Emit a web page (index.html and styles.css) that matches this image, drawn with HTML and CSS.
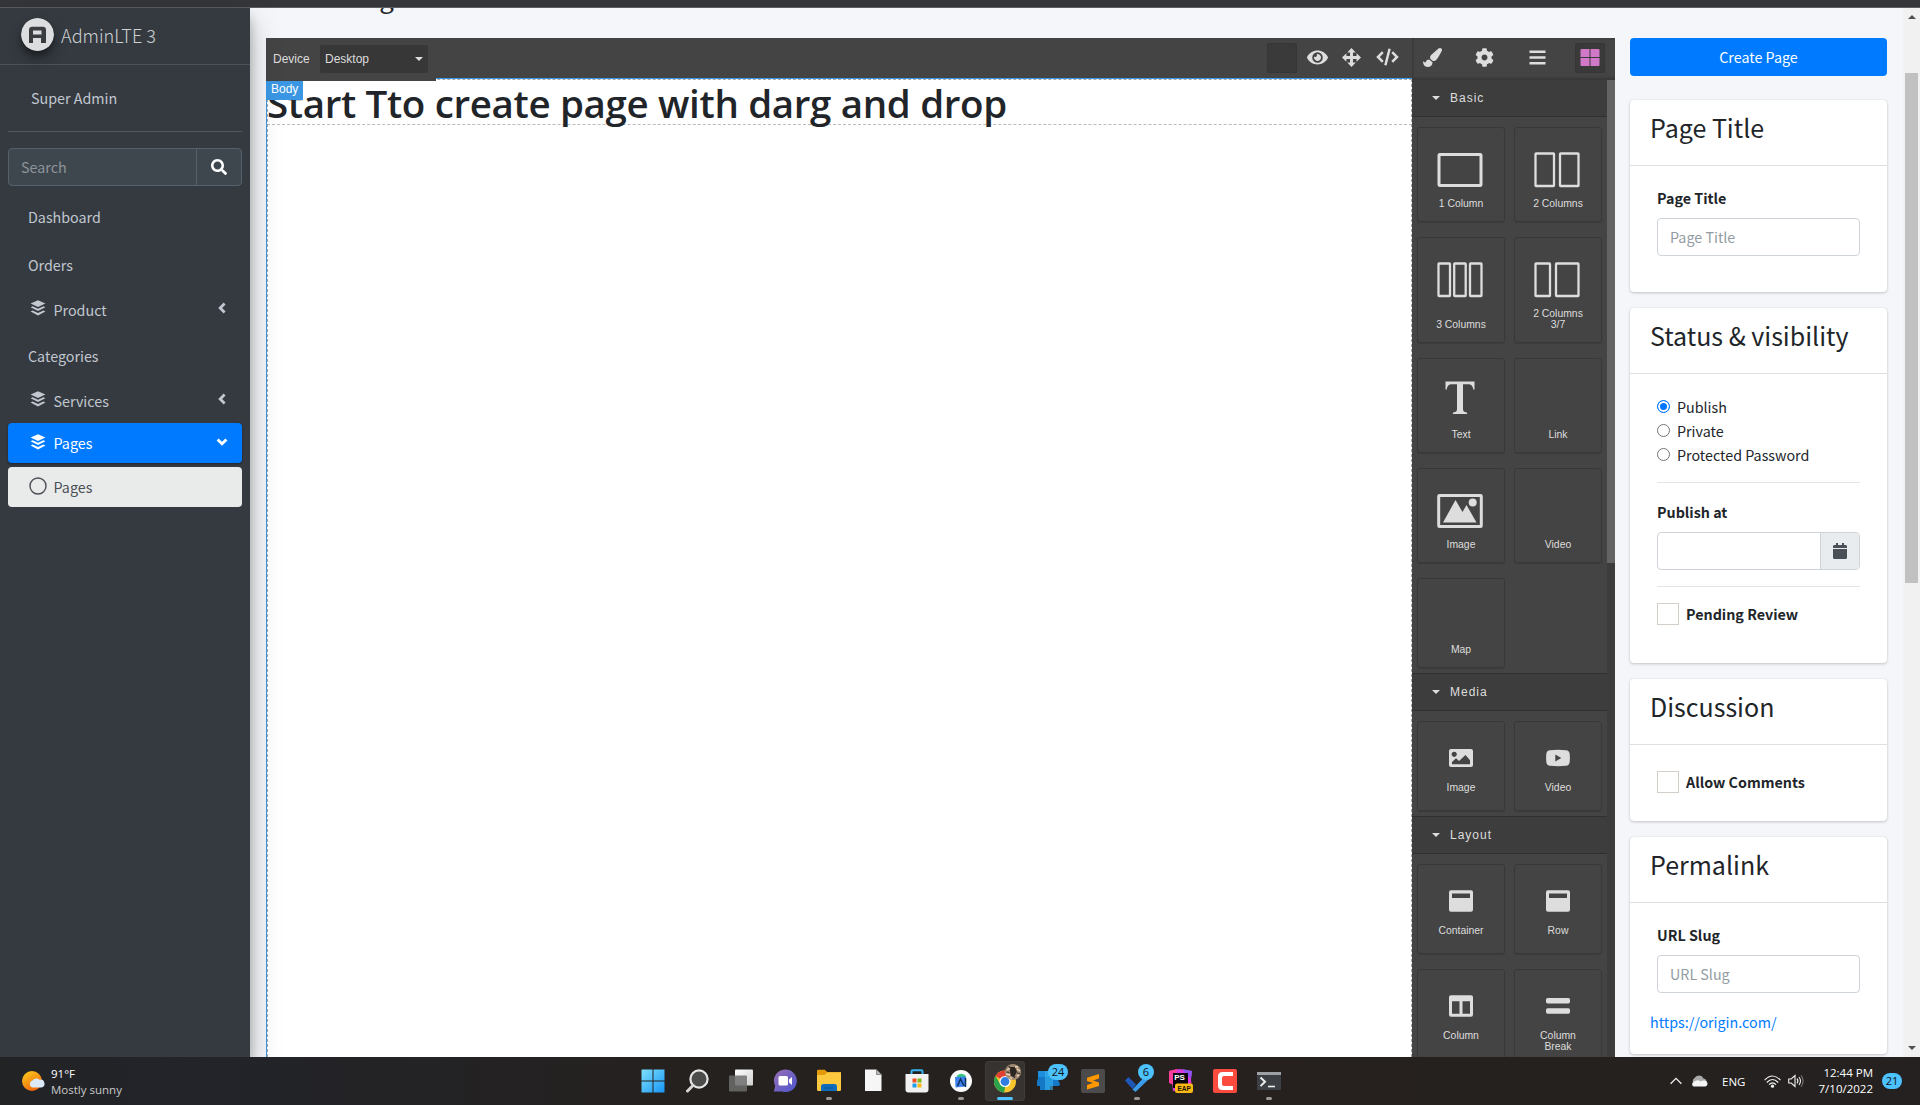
FILE: index.html
```html
<!DOCTYPE html>
<html lang="en">
<head>
<meta charset="utf-8">
<title>AdminLTE 3 | Create Page</title>
<link rel="stylesheet" href="styles.css">
</head>
<body>
<svg class="defs" aria-hidden="true">
  <symbol id="layers" viewBox="0 0 16 16"><path d="M8 .2 15.4 3.6 8 7 .6 3.600zM2.600 6.200 8 8.700l5.400-2.500 2 1L8 11 .6 7.200zM2.600 10.600 8 13.100l5.400-2.500 2 1L8 15.500.6 11.600z"/></symbol>
  <symbol id="angle" viewBox="0 0 8 12"><path d="M6.600 1.600 2.200 6l4.400 4.400" fill="none" stroke="currentColor" stroke-width="2.800"/></symbol>
</svg>
<div class="chrome-strip"></div>
<div class="app">
  <aside class="sidebar">
    <div class="brand">
      <svg class="brand-logo" viewBox="0 0 33 33"><circle cx="16.500" cy="16.500" r="16.500" fill="#dcdddf"/><path d="M8 25V12q0-3.200 3.200-3.200h10.600q3.200 0 3.200 3.200v13h-5v-5h-8v5zM12 12.500v4h8.500v-4z" fill="#3a3d40" fill-rule="evenodd"/></svg>
      <span class="brand-text">AdminLTE 3</span>
    </div>
    <div class="user-panel"><span>Super Admin</span></div>
    <div class="search">
      <div class="search-input">Search</div>
      <div class="search-btn"><svg width="16" height="16" viewBox="0 0 512 512"><path d="M505 442.700L405.300 343c-4.500-4.500-10.600-7-17-7H372c27.600-35.300 44-79.700 44-128C416 93.100 322.900 0 208 0S0 93.100 0 208s93.100 208 208 208c48.300 0 92.700-16.400 128-44v16.300c0 6.400 2.500 12.500 7 17l99.700 99.700c9.400 9.400 24.600 9.400 33.900 0l28.300-28.300c9.400-9.400 9.400-24.600.1-34zM208 336c-70.700 0-128-57.200-128-128 0-70.700 57.200-128 128-128 70.700 0 128 57.200 128 128 0 70.700-57.200 128-128 128z"/></svg></div>
    </div>
    <nav class="nav">
      <a class="nav-item plain">Dashboard</a>
      <a class="nav-item plain orders">Orders</a>
      <a class="nav-item tree"><svg class="ico"><use href="#layers"/></svg><span>Product</span><svg class="arrow"><use href="#angle"/></svg></a>
      <a class="nav-item plain cats">Categories</a>
      <a class="nav-item tree"><svg class="ico"><use href="#layers"/></svg><span>Services</span><svg class="arrow"><use href="#angle"/></svg></a>
      <a class="nav-item active"><svg class="ico"><use href="#layers"/></svg><span>Pages</span><svg class="arrow open"><use href="#angle"/></svg></a>
      <a class="nav-item sub"><svg class="ring" viewBox="0 0 18 18"><circle cx="9" cy="9" r="8" fill="none" stroke="currentColor" stroke-width="1.400"/></svg><span>Pages</span></a>
    </nav>
  </aside>

  <div class="content">
    <div class="page-head"><h1>Create Page</h1></div>
    <div class="columns">
      <section class="editor">
        <div class="stage">
          <div class="toolbar">
            <span class="dev-label">Device</span>
            <div class="select">Desktop<i class="caret"></i></div>
            <div class="tools">
              <span class="tool-btn pressed"></span>
              <svg class="t-eye" viewBox="0 0 576 512"><path d="M572.520 241.400C518.290 135.590 410.930 64 288 64S57.680 135.640 3.480 241.410a32.350 32.350 0 0 0 0 29.190C57.710 376.410 165.070 448 288 448s230.320-71.640 284.520-177.410a32.350 32.350 0 0 0 0-29.190zM288 400a144 144 0 1 1 144-144 143.930 143.930 0 0 1-144 144zm0-240a95.310 95.310 0 0 0-25.310 3.790 47.850 47.850 0 0 1-66.900 66.900A95.780 95.780 0 1 0 288 160z"/></svg>
              <svg class="t-move" viewBox="0 0 18 18"><path d="M9 0l4 4.200h-2.600v3.400h3.400V5L18 9l-4.200 4v-2.600h-3.400v3.400H13L9 18l-4-4.200h2.600v-3.400H4.200V13L0 9l4.200-4v2.600h3.400V4.200H5z"/></svg>
              <svg class="t-code" viewBox="0 0 23 18"><path d="M6.800 4.200 2 9l4.800 4.800M16.200 4.200 21 9l-4.800 4.800M13.600.8 9.400 17.200" fill="none" stroke="currentColor" stroke-width="2.500"/></svg>
            </div>
          </div>
          <div class="canvas">
            <div class="heading-box"><h2>Start Tto create page with darg and drop</h2></div>
            <span class="toolbar-tail"></span>
            <span class="badge">Body</span>
          </div>
        </div>
        <div class="panel">
          <div class="views">
            <svg class="v-brush" viewBox="0 0 512 512"><path d="M167.020 309.340c-40.120 2.580-76.530 17.860-97.190 72.300-2.350 6.210-8 9.980-14.590 9.980-11.110 0-45.460-27.670-55.250-34.350C0 439.620 37.930 512 128 512c75.860 0 128-43.770 128-120.190 0-3.110-.65-6.080-.97-9.130l-88.010-73.340zM457.890 0c-15.160 0-29.370 6.710-40.210 16.450C213.270 199.050 192 203.340 192 257.090c0 13.700 3.250 26.760 8.730 38.700l63.820 53.180c7.210 1.800 14.640 3.030 22.390 3.030 62.110 0 98.110-45.470 211.160-256.460 7.380-14.350 13.900-29.850 13.900-45.990C512 20.640 486 0 457.890 0z"/></svg>
            <svg class="v-cog" viewBox="0 0 512 512"><path d="M487.400 315.700l-42.600-24.600c4.300-23.200 4.300-47 0-70.200l42.600-24.600c4.900-2.800 7.100-8.600 5.500-14-11.100-35.600-30-67.800-54.700-94.600-3.800-4.100-10-5.100-14.800-2.300L380.800 110c-17.900-15.400-38.500-27.300-60.800-35.100V25.800c0-5.600-3.900-10.500-9.400-11.700-36.700-8.200-74.300-7.800-109.200 0-5.500 1.200-9.400 6.100-9.400 11.700V75c-22.200 7.900-42.800 19.800-60.800 35.100L88.700 85.500c-4.900-2.800-11-1.900-14.800 2.300-24.700 26.700-43.600 58.900-54.700 94.600-1.700 5.400.6 11.200 5.500 14L67.300 221c-4.300 23.200-4.300 47 0 70.200l-42.600 24.600c-4.900 2.800-7.100 8.600-5.500 14 11.100 35.600 30 67.800 54.700 94.600 3.800 4.100 10 5.100 14.800 2.300l42.600-24.600c17.900 15.400 38.500 27.300 60.800 35.100v49.200c0 5.600 3.900 10.500 9.400 11.700 36.700 8.200 74.300 7.800 109.200 0 5.500-1.200 9.400-6.100 9.400-11.700v-49.200c22.200-7.900 42.800-19.800 60.800-35.100l42.600 24.600c4.900 2.800 11 1.900 14.800-2.300 24.700-26.700 43.600-58.900 54.700-94.600 1.500-5.500-.7-11.300-5.600-14.100zM256 336c-44.100 0-80-35.900-80-80s35.900-80 80-80 80 35.900 80 80-35.900 80-80 80z"/></svg>
            <svg class="v-bars" viewBox="0 0 17 15"><path d="M.5.500h16v2.600H.5zM.5 6.200h16v2.600H.5zM.5 11.900h16v2.600H.5z"/></svg>
            <span class="tool-btn pressed pink"><svg width="20" height="17" viewBox="0 0 20 17"><path d="M1.500 0H9.500v8H.5V1q0-1 1-1zM10.500 0h8q1 0 1 1v7h-9zM.5 9h9v8h-8q-1 0-1-1zM10.500 9h9v7q0 1-1 1h-8z"/></svg></span>
          </div>
          <div class="panel-body">
            <div class="cats-list">
              <div class="cat-title"><i class="caret"></i>Basic</div>
              <div class="blocks basic">
                <div class="block"><svg class="big" viewBox="0 0 46 36"><rect x="2" y="2.500" width="42" height="31" rx=".8" class="line3"/></svg><span>1 Column</span></div>
                <div class="block"><svg class="big" viewBox="0 0 46 36"><rect x="1.500" y="1.500" width="18.500" height="32.500" rx=".6" class="line2"/><rect x="26" y="1.500" width="18.500" height="32.500" rx=".6" class="line2"/></svg><span>2 Columns</span></div>
                <div class="block"><svg class="big" viewBox="0 0 46 36"><rect x="1.500" y="1.500" width="11.500" height="32.500" rx=".6" class="line2"/><rect x="17.200" y="1.500" width="11.500" height="32.500" rx=".6" class="line2"/><rect x="33" y="1.500" width="11.500" height="32.500" rx=".6" class="line2"/></svg><span>3 Columns</span></div>
                <div class="block"><svg class="big" viewBox="0 0 46 36"><rect x="1.500" y="1.500" width="14.500" height="32.500" rx=".6" class="line2"/><rect x="22" y="1.500" width="22.500" height="32.500" rx=".6" class="line2"/></svg><span>2 Columns<br>3/7</span></div>
                <div class="block"><svg class="big glyph" viewBox="0 0 46 36"><path d="M8.500 1.500h29v8h-1.200q-.6-5.300-5-5.300H26V29q0 3.200 3.500 3.400h.6V34H15.900v-1.600h.6Q20 32.200 20 29V4.200h-5.300q-4.400 0-5 5.300H8.500z"/></svg><span>Text</span></div>
                <div class="block"><span>Link</span></div>
                <div class="block"><svg class="big" viewBox="0 0 46 36"><rect x="1.700" y="2.500" width="42.600" height="31" rx=".8" class="line3"/><path d="M6 29.500 18.500 7l7 12 4-7L39.500 29.500z"/><circle cx="35.700" cy="9.500" r="4"/></svg><span>Image</span></div>
                <div class="block"><span>Video</span></div>
                <div class="block"><span>Map</span></div>
              </div>
              <div class="cat-title ruled"><i class="caret"></i>Media</div>
              <div class="blocks compact">
                <div class="block"><svg class="small" viewBox="0 0 24 24"><path fill-rule="evenodd" d="M2 3h20q2 0 2 2v14q0 2-2 2H2q-2 0-2-2V5q0-2 2-2zM3 18.200h18v-4L16.500 9 10 15l-3-2.800L3 16zM5.200 5.700a2.600 2.600 0 1 0 .01 0z"/></svg><span>Image</span></div>
                <div class="block"><svg class="small" viewBox="0 0 24 24"><path fill-rule="evenodd" d="M4 4.200q8-.7 16 0 3.200.2 3.600 3.300.6 4.500 0 9-.4 3.100-3.600 3.300-8 .7-16 0Q.8 19.600.4 16.500q-.6-4.500 0-9Q.8 4.400 4 4.200zM9.300 8.600v6.800l6-3.400z"/></svg><span>Video</span></div>
              </div>
              <div class="cat-title ruled"><i class="caret"></i>Layout</div>
              <div class="blocks compact">
                <div class="block"><svg class="small" viewBox="0 0 24 24"><path fill-rule="evenodd" d="M2 1.200h20q2 0 2 2v17.600q0 2-2 2H2q-2 0-2-2V3.200q0-2 2-2zM3 4.500V9h18V4.500z"/></svg><span>Container</span></div>
                <div class="block"><svg class="small" viewBox="0 0 24 24"><path fill-rule="evenodd" d="M2 1.200h20q2 0 2 2v17.600q0 2-2 2H2q-2 0-2-2V3.200q0-2 2-2zM3 4.500V9h18V4.500z"/></svg><span>Row</span></div>
                <div class="block"><svg class="small" viewBox="0 0 24 24"><path fill-rule="evenodd" d="M2 1.200h20q2 0 2 2v17.600q0 2-2 2H2q-2 0-2-2V3.200q0-2 2-2zM3 7.200v12.500h7.500V7.200zM13.500 7.200v12.500H21V7.200z"/></svg><span>Column</span></div>
                <div class="block"><svg class="small" viewBox="0 0 24 24"><rect y="4" width="24" height="5.500" rx="1.700"/><rect y="14.300" width="24" height="5.500" rx="1.700"/></svg><span>Column<br>Break</span></div>
              </div>
            </div>
            <div class="panel-scroll"><div class="panel-thumb"></div></div>
          </div>
        </div>
      </section>

      <aside class="meta">
        <div class="btn-create">Create Page</div>
        <div class="card c-title">
          <h3>Page Title</h3>
          <div class="card-body">
            <label class="lbl">Page Title</label>
            <div class="field">Page Title</div>
          </div>
        </div>
        <div class="card c-status">
          <h3>Status &amp; visibility</h3>
          <div class="card-body">
            <div class="radio"><i class="dot on"></i>Publish</div>
            <div class="radio"><i class="dot"></i>Private</div>
            <div class="radio"><i class="dot"></i>Protected Password</div>
            <div class="rule first"></div>
            <label class="lbl">Publish at</label>
            <div class="date"><div class="date-input"></div><div class="date-btn"><svg width="14" height="16" viewBox="0 0 448 512"><path d="M12 192h424c6.600 0 12 5.400 12 12v260c0 26.500-21.500 48-48 48H48c-26.500 0-48-21.500-48-48V204c0-6.600 5.400-12 12-12zm436-44v-36c0-26.500-21.500-48-48-48h-48V12c0-6.600-5.400-12-12-12h-40c-6.600 0-12 5.400-12 12v52H160V12c0-6.600-5.400-12-12-12h-40c-6.600 0-12 5.400-12 12v52H48C21.500 64 0 85.500 0 112v36c0 6.600 5.400 12 12 12h424c6.600 0 12-5.400 12-12z"/></svg></div></div>
            <div class="rule second"></div>
            <div class="check"><i class="box"></i><span>Pending Review</span></div>
          </div>
        </div>
        <div class="card c-disc">
          <h3>Discussion</h3>
          <div class="card-body"><div class="check"><i class="box"></i><span>Allow Comments</span></div></div>
        </div>
        <div class="card c-perma">
          <h3>Permalink</h3>
          <div class="card-body">
            <label class="lbl">URL Slug</label>
            <div class="field">URL Slug</div>
            <a class="link">https://origin.com/</a>
          </div>
        </div>
      </aside>
    </div>
  </div>
  <div class="scrollbar"><i class="up"></i><div class="thumb"></div><i class="down"></i></div>
</div>

<footer class="taskbar">
  <div class="weather">
    <svg width="24" height="24" viewBox="0 0 24 24"><defs><linearGradient id="sun" x1="0" y1="0" x2=".6" y2="1"><stop offset="0" stop-color="#ffd21f"/><stop offset="1" stop-color="#f0650c"/></linearGradient></defs><circle cx="11" cy="11" r="10" fill="url(#sun)"/><path d="M12 17.500a3.500 3.500 0 0 1-.5-6.900 4.500 4.500 0 0 1 7-.8 3.900 3.900 0 0 1 2 7.700z" fill="#dce9f8"/></svg>
    <div class="weather-text"><b>91°F</b><span>Mostly sunny</span></div>
  </div>
  <div class="apps">
    <div class="app-ico"><svg viewBox="0 0 24 24"><defs><linearGradient id="win" x2="1" y2="1"><stop offset="0" stop-color="#7fe0fb"/><stop offset="1" stop-color="#1795f5"/></linearGradient></defs><path d="M1 .5h10.500V11.500H.5V1zM12.500.5H23.500V11.500h-11zM.5 12.500h11v11H.5zM12.500 12.500h11v11h-11z" fill="url(#win)"/></svg></div>
    <div class="app-ico"><svg viewBox="0 0 24 24"><circle cx="14" cy="10" r="8.600" fill="#4c4c4b" stroke="#e6e6e6" stroke-width="2.200"/><path d="M8 16.500 2.500 22" stroke="#d7d7d7" stroke-width="3" stroke-linecap="round"/></svg></div>
    <div class="app-ico"><svg viewBox="0 0 24 24"><defs><linearGradient id="tv" x2="1" y2="1"><stop offset="0" stop-color="#fff"/><stop offset="1" stop-color="#cfcfcf"/></linearGradient></defs><rect x="6" y=".5" width="18" height="16" rx="1" fill="url(#tv)"/><rect x="0" y="6.500" width="18" height="16" rx="1" fill="#6d6d6d" opacity=".85"/></svg></div>
    <div class="app-ico"><svg viewBox="0 0 24 24"><defs><linearGradient id="chat" x2="1" y2="1"><stop offset="0" stop-color="#9a6fb5"/><stop offset="1" stop-color="#4a55cf"/></linearGradient></defs><path d="M12 .5A11.300 11.300 0 1 1 9 22.500H.8L2.200 17A11.300 11.300 0 0 1 12 .5z" fill="url(#chat)"/><rect x="5.500" y="7" width="9.500" height="9.500" rx="1.500" fill="#fff"/><path d="M16 10.500l3-2.500v8l-3-2.500z" fill="#fff"/></svg></div>
    <div class="app-ico run"><svg viewBox="0 0 24 24"><path d="M0 2q0-1.300 1.300-1.300h6.500l2.700 2.600H24V8H0z" fill="#e39a0b"/><path d="M0 6h7.500l3-2.700H24V20.500q0 1.500-1.500 1.500h-21Q0 22 0 20.500z" fill="#fdc93f"/><path d="M4 22v-4.500Q4 15 6.500 15h11q2.500 0 2.500 2.500V22z" fill="#0f6cbd"/><path d="M8 19h8" stroke="#084e8c"/></svg></div>
    <div class="app-ico"><svg viewBox="0 0 24 24"><path d="M4 .5h11.500l5 5V22H4z" fill="#f6f6f6"/><path d="M15.500.500v5h5z" fill="#bdbdbd" stroke="#555" stroke-width=".6"/></svg></div>
    <div class="app-ico"><svg viewBox="0 0 24 24"><path d="M6.500 6V2.500q0-1.300 1.300-1.300h8.400q1.300 0 1.300 1.300V6" fill="none" stroke="#35b4f0" stroke-width="2"/><path d="M.5 5h23v15.500q0 3-3 3h-17q-3 0-3-3z" fill="#f1f1f1"/><path d="M7.500 9.500h4v4h-4z" fill="#f04f24"/><path d="M12.500 9.500h4v4h-4z" fill="#7db81a"/><path d="M7.500 14.500h4v4h-4z" fill="#1d9fe8"/><path d="M12.500 14.500h4v4h-4z" fill="#fbb812"/></svg></div>
    <div class="app-ico run"><svg viewBox="0 0 24 24"><circle cx="12" cy="12" r="11" fill="#fbfbfb"/><path d="M8 6.500q4-3.500 8.500 0l.8 5H7z" fill="#34c77b"/><path d="M6 8l10-.5q1 0 1 1l-1 9-9.500 1z" fill="#3d80ee"/><path d="M8.500 17l3-7 3.500 7M16.500 9v9" stroke="#0d2f5f" stroke-width="1.500" fill="none"/></svg></div>
    <div class="app-ico run-active"><svg viewBox="0 0 24 24"><circle cx="12" cy="12.500" r="11" fill="#f7c52c"/><path d="M12 12.500 2.500 7A11 11 0 0 1 21.500 7z" fill="#e24034"/><path d="M12 12.500 12 19l-1 4.500A11 11 0 0 1 2.500 7l5 8.500z" fill="#2ba24c"/><circle cx="12" cy="12.500" r="5.600" fill="#fff"/><circle cx="12" cy="12.500" r="4.400" fill="#2f7de1"/></svg><svg class="avatar" viewBox="0 0 16 16"><circle cx="8" cy="8" r="8" fill="#a08a72"/><path d="M5 3l5 0 2 5-3 5-3-1-1-4z" fill="#2c2623"/><path d="M2 6l3-2M12 5l3 2M1 10l4 1M12 12l2-1M10 3l3 0M5 13l2 2" stroke="#e8d3b8" stroke-width="1.400"/><path d="M4 2l1 2M1.500 8l3 .5M12 9l3 .5M9 14l1-2" stroke="#3a302a" stroke-width="1.200"/></svg></div>
    <div class="app-ico"><svg viewBox="0 0 24 24"><path d="M1 2h14v14H1z" fill="#1d8fdc"/><path d="M0 12q1-3 2-4h18l3 7q0 2-2 2h-8v4H3v-4H0z" fill="#1478c6"/><path d="M8 2h8v19H8z" fill="#37b4f2" opacity=".6"/></svg><span class="count">24</span></div>
    <div class="app-ico"><svg viewBox="0 0 24 24"><rect width="24" height="24" rx="2" fill="#4b4b4b"/><path d="M6 8.800 18 5v4.500l-6 2 6 2V17L6 20.500V16l6-2-6-2z" fill="#ff9800"/></svg></div>
    <div class="app-ico run"><svg viewBox="0 0 24 24"><path d="M0 11.500 3.500 8 11 15.500 7.500 20z" fill="#1d57b8"/><path d="M7.500 20.500 21 6l3.500 3.500-14 13.500z" fill="#3b9ceb"/></svg><span class="count round">6</span></div>
    <div class="app-ico"><svg viewBox="0 0 24 24"><path d="M0 2 10 0l13 2-1 8 1 12H4L3 12z" fill="#d93ae0"/><path d="M0 2l8-2-3 16-5-2z" fill="#ff3d9a"/><path d="M13 0l10 2-1 8z" fill="#8a55f0"/><rect x="4" y="4" width="15" height="15" fill="#0b0710"/><text x="5.200" y="11" font-family="Liberation Sans" font-weight="700" font-size="8" fill="#fff">PS</text><rect x="6" y="14.500" width="18" height="9.500" rx="2" fill="#fcb813"/><text x="8.500" y="21.600" font-family="Liberation Sans" font-weight="700" font-size="6.500" fill="#1a1200">EAP</text></svg></div>
    <div class="app-ico"><svg viewBox="0 0 24 24"><rect width="24" height="24" rx="2" fill="#fb4a3e"/><path d="M20 3v4h-9q-2 0-2 2v6q0 2 2 2h9v4H9.500Q5 21 5 16.500v-9Q5 3 9.500 3z" fill="#fff"/></svg></div>
    <div class="app-ico run"><svg viewBox="0 0 24 24"><rect y="3" width="24" height="18" rx="1" fill="#3c4044"/><path d="M0 3h24v3H0z" fill="#9da1a4"/><path d="M3.500 8.500 8 12.800l-4.500 4.300" fill="none" stroke="#eee" stroke-width="2"/><path d="M11 17.500h7" stroke="#eee" stroke-width="1.600"/></svg></div>
  </div>
  <div class="tray">
    <svg width="12" height="8" viewBox="0 0 12 8"><path d="M.6 6.800 6 1.400l5.400 5.400" fill="none" stroke="#eee" stroke-width="1.300"/></svg>
    <svg class="cloud" width="17" height="12" viewBox="0 0 17 12"><path d="M4 10A4 4 0 0 1 3.500 3a5 5 0 0 1 9 .5A3.500 3.500 0 0 1 14 10z" fill="#a9a9a9"/><path d="M2.500 11.500a2.500 2.500 0 0 1 0-4.500q4-3 7-.5 4-2 6.500.5 1.500 3.500-1.500 4.500z" fill="#f4f4f4"/></svg>
    <span class="eng">ENG</span>
    <svg class="wifi" width="17" height="13" viewBox="0 0 17 13"><g fill="none" stroke="#f0f0f0" stroke-width="1.200"><path d="M.6 5.200q7.900-8.400 15.800 0M2.800 7.500q5.700-6 11.400 0M5 9.700q3.500-3.700 7 0"/></g><circle cx="8.500" cy="11.200" r="1.600" fill="#f0f0f0"/></svg>
    <svg class="vol" width="16" height="14" viewBox="0 0 16 14"><g fill="none" stroke="#f0f0f0" stroke-width="1.100"><path d="M.7 5v4h2.500L7 12.500v-11L3.200 5zM9 4.700q1.800 2.300 0 4.600M11 3q3 4 0 8"/><path d="M13 1.200q4.200 5.800 0 11.600" stroke="#777"/></g></svg>
    <div class="clock"><span>12:44 PM</span><span>7/10/2022</span></div>
    <span class="notif">21</span>
  </div>
</footer>
</body>
</html>
```
FILE: styles.css
```css
* { box-sizing: border-box; }
body { margin: 0; width: 1920px; height: 1105px; overflow: hidden; display: flex; flex-direction: column; font-family: "Noto Sans CJK SC", sans-serif; font-size: 14.300px; line-height: 24px; color: #212529; background: #f4f6f9; }
svg { display: block; flex: none; fill: currentColor; }
i { display: block; flex: none; }
h1, h2, h3 { margin: 0; font-weight: 400; }
.defs { position: absolute; width: 0; height: 0; }
.chrome-strip { height: 8px; flex: none; background: #35363a; border-bottom: 1px solid #5c5d60; }
.app { display: flex; height: 1049px; flex: none; }

/* sidebar */
.sidebar { width: 250px; flex: none; background: #343a40; color: #c2c7d0; box-shadow: 0 14px 28px rgba(0,0,0,.25), 0 10px 10px rgba(0,0,0,.22); position: relative; z-index: 2; }
.brand { height: 57px; border-bottom: 1px solid #4b545c; display: flex; align-items: flex-start; padding: 10px 0 0 21px; gap: 7px; }
.brand-logo { width: 33px; height: 33px; border-radius: 50%; box-shadow: 0 8px 14px rgba(0,0,0,.3), 0 4px 5px rgba(0,0,0,.25); }
.brand-text { font-size: 18.100px; font-weight: 300; line-height: 30px; padding-top: 2px; color: #cdd0d3; }
.user-panel { height: 67px; margin: 0 8px; border-bottom: 1px solid #4f5962; padding: 21px 0 0 23px; }
.search { display: flex; height: 38px; margin: 16px 8px 0; border: 1px solid #56606a; border-radius: 4px; background: #3f474e; }
.search-input { width: 188px; padding: 6px 12px; color: #8d949a; border-right: 1px solid #56606a; }
.search-btn { flex: 1; display: flex; justify-content: center; align-items: center; color: #fff; padding-bottom: 1px; }
.nav { padding: 7px 8px 0; display: flex; flex-direction: column; }
.nav-item { display: flex; align-items: center; height: 47px; padding-left: 20px; border-radius: 4px; flex: none; }
.orders { height: 49px; }
.tree { height: 41px; padding-left: 22px; }
.cats { height: 50px; padding-top: 1px; }
.nav-item .ico { width: 16px; height: 16px; margin: 0 7.500px 3px 0; }
.nav-item .arrow { width: 8px; height: 12px; margin: 0 16px 3px auto; }
.nav-item .open { transform: rotate(-90deg); }
.active { height: 40px; padding-left: 22px; background: #007bff; color: #fff; box-shadow: 0 1px 3px rgba(0,0,0,.12), 0 1px 2px rgba(0,0,0,.24); margin-top: 2px; }
.sub { height: 40px; margin-top: 4px; padding-left: 21px; background: #e9ebeb; color: #4b5056; }
.ring { width: 18px; height: 18px; margin: 0 6.500px 2px 0; }

/* main */
.content { width: 1653px; flex: none; display: flex; flex-direction: column; overflow: hidden; }
.page-head { height: 30px; flex: none; overflow: hidden; padding-left: 16px; }
.page-head h1 { font-size: 25.800px; line-height: 34px; margin-top: -28px; }
.columns { display: flex; gap: 15px; height: 1019px; padding-left: 16px; }

/* page editor */
.editor { width: 1349px; flex: none; display: flex; background: #444; color: #ddd; font-family: "Liberation Sans", Arial, sans-serif; font-size: 12px; }
.stage { width: 1146px; flex: none; display: flex; flex-direction: column; }
.toolbar { height: 40px; flex: none; display: flex; align-items: center; padding-left: 7px; }
.dev-label { width: 47px; line-height: 20px; padding-top: 1px; }
.select { width: 108px; height: 28px; margin-top: 2px; background: #373737; border-radius: 2px; display: flex; justify-content: space-between; align-items: center; padding: 0 5px; }
.caret { width: 0; height: 0; border: 4px solid transparent; border-top-color: currentColor; border-bottom-width: 0; }
.tools { margin-left: auto; display: flex; align-items: center; color: #ddd; }
.tool-btn { width: 30px; height: 30px; border-radius: 2px; }
.pressed { background: #3a3a3a; box-shadow: 0 0 2px #303030 inset; }
.t-eye { width: 21px; height: 19px; margin: 0 0 2px 10px; }
.t-move { width: 19px; height: 19px; margin: 0 0 2px 14px; }
.t-code { width: 23px; height: 18px; margin: 0 13px 2px 15px; }
.canvas { flex: 1; background: #fff; border-top: 1px solid #3b97e3; border-left: 1px solid #3b97e3; position: relative; color: #212529; }
.canvas::before { content: ""; position: absolute; inset: 0; border: 1px dashed #aaa; border-bottom: 0; }
.heading-box { height: 46px; border-bottom: 1px dashed #bbb; }
.heading-box h2 { font-family: "Open Sans", "Noto Sans", sans-serif; font-size: 38.500px; font-weight: 600; letter-spacing: -.340px; line-height: 48px; white-space: nowrap; }
.toolbar-tail { position: absolute; left: -1px; top: -1px; width: 170px; height: 3px; background: #444; }
.badge { position: absolute; left: -1px; top: 2px; width: 37px; height: 19px; padding-left: 5px; background: #3b97e3; color: #fff; font: 12px/16px "Liberation Sans", Arial, sans-serif; }
.panel { width: 203px; flex: none; display: flex; flex-direction: column; background: #444; }
.views { height: 42px; flex: none; border-bottom: 2px solid #393939; box-shadow: 1px 0 2px #363636 inset; display: flex; align-items: center; padding-left: 11px; }
.views svg { margin-bottom: 2px; }
.v-brush { width: 19px; height: 19px; }
.v-cog { width: 19px; height: 19px; margin-left: 33px; }
.v-bars { width: 17px; height: 15px; margin-left: 35px; }
.pink { display: flex; justify-content: center; align-items: center; color: #d278c9; margin-left: 29px; }
.panel-body { flex: 1; display: flex; min-height: 0; }
.cats-list { width: 195px; overflow: hidden; }
.cat-title { height: 37px; background: #3d3d3d; border-bottom: 1px solid #303030; letter-spacing: 1px; padding-left: 20px; display: flex; align-items: center; gap: 10px; }
.ruled { height: 38px; border-top: 1px solid #303030; }
.blocks { display: grid; grid-template-columns: 88px 88px; column-gap: 9px; row-gap: 15px; padding: 10px 5px 5px; }
.basic { grid-template-rows: 95px 106px 95px 95px 90px; }
.compact { grid-template-rows: 90px; grid-auto-rows: 101px; }
.block { border: 1px solid #383838; border-radius: 3px; box-shadow: 0 1px 1px rgba(0,0,0,.12); display: flex; flex-direction: column; align-items: center; text-align: center; justify-content: flex-end; font-size: 10.400px; line-height: 11px; padding-bottom: 12px; }
.compact .block { justify-content: flex-start; padding-bottom: 0; }
.block .big { width: 46px; height: 36px; margin: 24px 2px auto 0; }
.block .glyph { margin-top: 21px; }
.block .small { width: 24px; height: 24px; margin: 24px 0 12px; }
.line3 { fill: none; stroke: #ddd; stroke-width: 3; }
.line2 { fill: none; stroke: #ddd; stroke-width: 2.300; }
.panel-scroll { width: 8px; background: #3c3c3c; }
.panel-thumb { height: 483px; background: #646464; }

/* page settings */
.meta { width: 257px; flex: none; }
.btn-create { height: 38px; border-radius: 4px; background: #007bff; color: #fff; text-align: center; line-height: 38px; margin-bottom: 24px; }
.card { background: #fff; border-radius: 4px; box-shadow: 0 0 1px rgba(0,0,0,.125), 0 1px 3px rgba(0,0,0,.2); margin-bottom: 16px; }
.card h3 { height: 66px; border-bottom: 1px solid #dfdfdf; padding: 10px 0 0 20px; font-size: 25px; line-height: 34px; }
.card-body { padding: 20px 27px 0; }
.c-title { height: 192px; }
.c-status { height: 355px; }
.c-disc { height: 142px; }
.c-perma { height: 217px; margin: 0; }
.lbl { display: block; height: 32px; font-weight: 700; }
.field { height: 38px; border: 1px solid #ced4da; border-radius: 4px; padding: 6px 12px; color: #939ba2; }
.c-status .card-body { padding-top: 21px; }
.radio { display: flex; height: 24px; gap: 7px; }
.dot { width: 13px; height: 13px; border: 1px solid #767676; border-radius: 50%; margin-top: 5px; }
.on { border-color: #0075ff; background: #0075ff; box-shadow: inset 0 0 0 2px #fff; }
.rule { border-top: 1px solid #e4e4e4; }
.rule.first { margin: 15px 0 17px; }
.rule.second { margin: 16px 0; }
.date { display: flex; height: 38px; border: 1px solid #ced4da; border-radius: 4px; overflow: hidden; }
.date-input { width: 163px; border-right: 1px solid #ced4da; }
.date-btn { flex: 1; background: #e9ecef; color: #495057; display: flex; align-items: center; justify-content: center; }
.check { display: flex; height: 24px; gap: 7px; font-weight: 700; }
.check span { margin-top: -1px; }
.box { width: 22px; height: 22px; border: 1px solid #d3cfc8; }
.c-disc .card-body { padding-top: 26px; }
.link { display: block; color: #007bff; margin: 17px 0 0 -7px; }

.scrollbar { width: 17px; background: #f1f1f1; display: flex; flex-direction: column; align-items: center; color: #505050; }
.up { border: 4px solid transparent; border-bottom-color: currentColor; border-top-width: 0; margin-top: 7px; }
.down { border: 4px solid transparent; border-top-color: currentColor; border-bottom-width: 0; margin: auto 0 7px; }
.thumb { width: 13px; height: 510px; background: #c1c1c1; margin-top: 54px; }

/* taskbar */
.taskbar { height: 48px; flex: none; display: flex; background: linear-gradient(90deg, #212325 0, #22242a 10%, #25211f 35%, #26211e 65%, #242120 100%); color: #fff; font-family: "Open Sans", "Noto Sans", sans-serif; font-size: 11.500px; position: relative; z-index: 3; }
.weather { width: 630px; padding: 13px 0 0 21px; display: flex; gap: 6px; }
.weather-text { display: flex; flex-direction: column; line-height: 16px; margin-top: -4px; }
.weather-text b { font-weight: 500; }
.weather-text span { color: #cacaca; }
.apps { display: flex; align-items: center; gap: 4px; padding-left: 3px; }
.app-ico { width: 40px; height: 40px; border-radius: 4px; display: flex; justify-content: center; align-items: center; position: relative; }
.app-ico svg { width: 24px; height: 24px; }
.run::after, .run-active::after { content: ""; position: absolute; left: 17px; bottom: 1px; width: 6px; height: 3px; border-radius: 2px; background: #9b9894; }
.run-active { background: #373330; box-shadow: inset 0 0 0 1px #403c39; }
.run-active::after { left: 12px; width: 16px; background: #4cc2ff; }
.app-ico .avatar { position: absolute; width: 16px; height: 16px; left: 20px; top: 3px; }
.count { position: absolute; left: 19px; top: 3px; width: 20px; height: 16px; border-radius: 8px; background: #4cc2ff; color: #111; line-height: 16px; text-align: center; font-size: 11px; }
.round { width: 16px; left: 21px; }
.tray { margin-left: auto; display: flex; align-items: center; padding-right: 18px; }
.cloud { margin-left: 9px; }
.eng { margin: 2px 0 0 14px; width: 24px; }
.wifi { margin-left: 18px; }
.vol { margin-left: 7px; }
.clock { width: 69px; display: flex; flex-direction: column; text-align: right; line-height: 16px; }
.notif { width: 20px; height: 16px; border-radius: 8px; background: #4cc2ff; color: #111; line-height: 16px; text-align: center; font-size: 11px; margin-left: 9px; }
```
